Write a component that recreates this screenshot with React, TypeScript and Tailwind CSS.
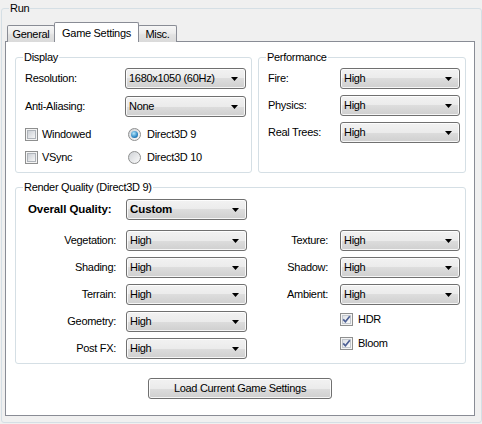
import type { ReactNode } from "react";

function Combo({ value, bold, w = "w-[121px]" }: { value: string; bold?: boolean; w?: string }) {
  return (
    <div
      className={`flex h-[21px] ${w} shrink-0 items-center justify-between rounded-[3px] border border-[#707070] bg-[linear-gradient(#f2f2f2_0%,#ebebeb_50%,#dddddd_50%,#cfcfcf_100%)] pl-[3px] pr-[7px] shadow-[inset_0_0_0_1px_rgba(255,255,255,0.8)]`}
    >
      <span className={bold ? "text-[11.5px] font-bold tracking-[-0.1px]" : ""}>{value}</span>
      <svg width="7" height="4" viewBox="0 0 7 4">
        <path d="M0 0H7L3.5 4Z" fill="#000" />
      </svg>
    </div>
  );
}

function Check({ checked }: { checked?: boolean }) {
  return (
    <span className="flex h-[13px] w-[13px] shrink-0 items-center justify-center border border-[#8e8f8f] bg-[#f4f4f4]">
      <span
        className={`flex h-[9px] w-[9px] items-center justify-center border ${
          checked
            ? "border-[#c3c8ce] bg-[linear-gradient(135deg,#dfe2e6,#fbfbfb)]"
            : "border-[#aeb3b9] bg-[linear-gradient(135deg,#cbcfd5,#f6f6f6)]"
        }`}
      >
        {checked && (
          <svg width="9" height="9" viewBox="0 0 9 9" className="overflow-visible">
            <path d="M1.2 4.4 L3.4 6.8 L7.8 1.2" stroke="#4c5f94" strokeWidth="1.7" fill="none" />
          </svg>
        )}
      </span>
    </span>
  );
}

function Radio({ checked }: { checked?: boolean }) {
  return (
    <span className="flex h-[13px] w-[13px] shrink-0 items-center justify-center rounded-full border border-[#8e8f8f] bg-[linear-gradient(135deg,#cfd2d6,#fbfbfb)]">
      {checked && (
        <span className="h-[7px] w-[7px] rounded-full bg-[radial-gradient(circle_at_40%_35%,#b6e8fb,#2c86c4_60%,#1b4f7c)]" />
      )}
    </span>
  );
}

function Group({ title, className, children }: { title: string; className: string; children: ReactNode }) {
  return (
    <fieldset className={`rounded-[3px] border border-[#d5dfe5] ${className}`}>
      <legend className="ml-[7px] px-[1px] leading-[14px]">{title}</legend>
      {children}
    </fieldset>
  );
}

function Field({ label, value, labelW, selectW }: { label: string; value: string; labelW: string; selectW?: string }) {
  return (
    <div className="flex h-[21px] items-center">
      <span className={`${labelW} shrink-0`}>{label}</span>
      <Combo value={value} w={selectW} />
    </div>
  );
}

// right-aligned label + combo (render quality rows)
function RField({ label, labelW, selectW }: { label: string; labelW: string; selectW?: string }) {
  return (
    <div className="flex h-[21px] items-center">
      <span className={`${labelW} shrink-0 text-right`}>{label}</span>
      <Combo value="High" w={selectW} />
    </div>
  );
}

export default function App() {
  const tabBg = "bg-[linear-gradient(#f6f6f6_0%,#ececec_45%,#e2e2e2_55%,#dadada_100%)]";

  return (
    <div className="h-[424px] w-[482px] overflow-hidden bg-[#f0f0f0] pl-[1px] pt-[1px] font-['Liberation_Sans',Arial,sans-serif] text-[11px] tracking-[-0.3px] text-black">
      <fieldset className="h-[422px] w-[481px] rounded-[3px] border border-[#d5dfe5]">
        <legend className="ml-[7px] px-[1px] leading-[14px]">Run</legend>

        {/* Tabs */}
        <div className="mt-[7px] flex h-[20px] items-end pl-[5px]">
          <div className={`flex h-[17px] w-[48px] items-center justify-center rounded-t-[2px] border border-b-0 border-[#898c95] ${tabBg}`}>
            General
          </div>
          <div className="relative z-10 -ml-[1px] flex h-[20px] w-[85px] items-start justify-center rounded-t-[2px] border border-b-0 border-[#898c95] bg-white pt-[2px]">
            Game Settings
          </div>
          <div className={`-ml-[1px] flex h-[17px] w-[39px] items-center justify-center rounded-t-[2px] border border-b-0 border-[#898c95] ${tabBg}`}>
            Misc.
          </div>
        </div>

        {/* Tab page */}
        <div className="-mt-[1px] ml-[3px] flex h-[375px] w-[470px] flex-col border border-[#898c95] bg-white pl-[9px] pt-[8px]">
          <div className="flex gap-[6px]">
            <Group title="Display" className="h-[123px] w-[237px]">
              <div className="flex flex-col gap-[7px] pl-[9px] pt-[4px]">
                <Field label="Resolution:" value="1680x1050 (60Hz)" labelW="w-[100px]" />
                <Field label="Anti-Aliasing:" value="None" labelW="w-[100px]" />
              </div>
              <div className="mt-[11px] flex flex-col gap-[10px] pl-[9px]">
                <div className="flex h-[13px] items-center">
                  <div className="flex w-[103px] items-center gap-[4px]">
                    <Check />
                    <span>Windowed</span>
                  </div>
                  <div className="flex items-center gap-[6px]">
                    <Radio checked />
                    <span>Direct3D 9</span>
                  </div>
                </div>
                <div className="flex h-[13px] items-center">
                  <div className="flex w-[103px] items-center gap-[4px]">
                    <Check />
                    <span>VSync</span>
                  </div>
                  <div className="flex items-center gap-[6px]">
                    <Radio />
                    <span>Direct3D 10</span>
                  </div>
                </div>
              </div>
            </Group>

            <Group title="Performance" className="h-[123px] w-[208px]">
              <div className="flex flex-col gap-[6px] pl-[9px] pt-[4px]">
                <Field label="Fire:" value="High" labelW="w-[72px]" selectW="w-[120px]" />
                <Field label="Physics:" value="High" labelW="w-[72px]" selectW="w-[120px]" />
                <Field label="Real Trees:" value="High" labelW="w-[72px]" selectW="w-[120px]" />
              </div>
            </Group>
          </div>

          <Group title="Render Quality (Direct3D 9)" className="mt-[7px] h-[184px] w-[451px]">
            <div className="mt-[5px] flex h-[21px] items-center">
              <span className="w-[110px] shrink-0 pl-[12px] text-[11.5px] font-bold tracking-[-0.1px]">Overall Quality:</span>
              <Combo value="Custom" bold />
            </div>
            <div className="mt-[10px] flex">
              <div className="flex flex-col gap-[6px]">
                <RField label="Vegetation:" labelW="w-[100px] mr-[10px]" />
                <RField label="Shading:" labelW="w-[100px] mr-[10px]" />
                <RField label="Terrain:" labelW="w-[100px] mr-[10px]" />
                <RField label="Geometry:" labelW="w-[100px] mr-[10px]" />
                <RField label="Post FX:" labelW="w-[100px] mr-[10px]" />
              </div>
              <div className="flex flex-col">
                <div className="flex flex-col gap-[6px]">
                  <RField label="Texture:" labelW="w-[81px] mr-[12px]" selectW="w-[120px]" />
                  <RField label="Shadow:" labelW="w-[81px] mr-[12px]" selectW="w-[120px]" />
                  <RField label="Ambient:" labelW="w-[81px] mr-[12px]" selectW="w-[120px]" />
                </div>
                <div className="ml-[93px] mt-[8px] flex h-[13px] items-center gap-[5px]">
                  <Check checked />
                  <span>HDR</span>
                </div>
                <div className="ml-[93px] mt-[11px] flex h-[13px] items-center gap-[5px]">
                  <Check checked />
                  <span>Bloom</span>
                </div>
              </div>
            </div>
          </Group>

          <div className="ml-[133px] mt-[14px] flex h-[21px] w-[184px] items-center justify-center rounded-[3px] border border-[#707070] bg-[linear-gradient(#f2f2f2_0%,#ebebeb_50%,#dddddd_50%,#cfcfcf_100%)] shadow-[inset_0_0_0_1px_rgba(255,255,255,0.8)]">
            Load Current Game Settings
          </div>
        </div>
      </fieldset>
    </div>
  );
}
